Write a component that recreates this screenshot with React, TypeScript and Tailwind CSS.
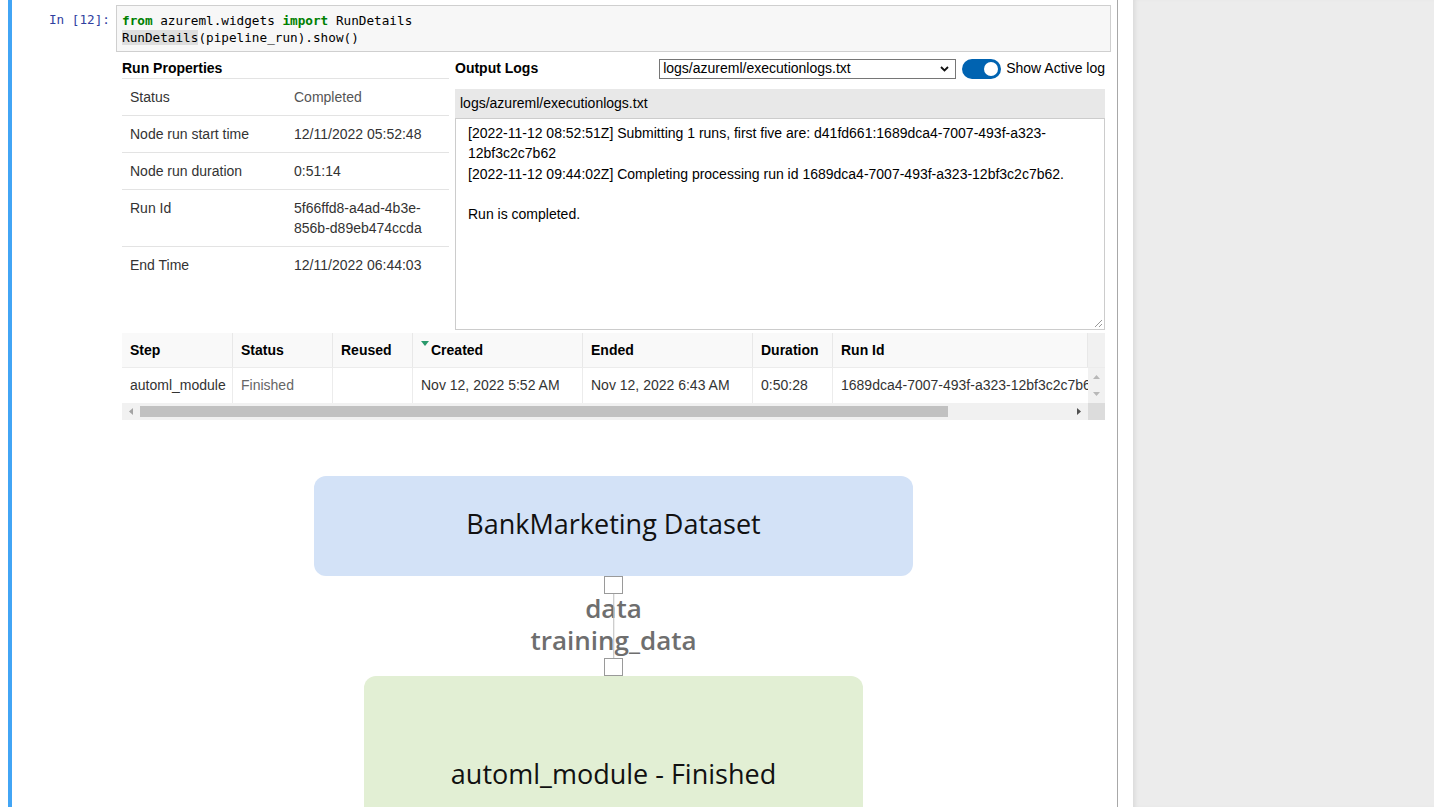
import React from "react";

const runProps = [
  { label: "Status", value: ["Completed"], muted: true },
  { label: "Node run start time", value: ["12/11/2022 05:52:48"] },
  { label: "Node run duration", value: ["0:51:14"] },
  { label: "Run Id", value: ["5f66ffd8-a4ad-4b3e-", "856b-d89eb474ccda"] },
  { label: "End Time", value: ["12/11/2022 06:44:03"] },
];

const columns = [
  { name: "Step", w: "w-[111px]" },
  { name: "Status", w: "w-[100px]" },
  { name: "Reused", w: "w-[80px]" },
  { name: "Created", w: "w-[170px]", sorted: true },
  { name: "Ended", w: "w-[170px]" },
  { name: "Duration", w: "w-[80px]" },
  { name: "Run Id", w: "w-[255px]" },
];

const stepRow = [
  "automl_module",
  "Finished",
  "",
  "Nov 12, 2022 5:52 AM",
  "Nov 12, 2022 6:43 AM",
  "0:50:28",
  "1689dca4-7007-493f-a323-12bf3c2c7b62",
];

const logLines = [
  "[2022-11-12 08:52:51Z] Submitting 1 runs, first five are: d41fd661:1689dca4-7007-493f-a323-",
  "12bf3c2c7b62",
  "[2022-11-12 09:44:02Z] Completing processing run id 1689dca4-7007-493f-a323-12bf3c2c7b62.",
  "",
  "Run is completed.",
];

const Port = () => (
  <div className="w-[19px] h-[18px] border-[1.5px] border-[#9a9a9a] bg-white z-10" />
);

const App = () => {
  return (
    <div className="flex h-[807px] w-[1434px] overflow-hidden bg-white font-['Liberation_Sans',Arial,sans-serif] text-[#333]">
      {/* notebook */}
      <div className="w-[1118px] shrink-0 border-r border-[#a8a8a8] pl-[8px]">
        <div className="h-full border-l-4 border-[#42a5f5] pt-[5px]">
          {/* input */}
          <div className="flex">
            <div className="w-[104px] shrink-0 pr-[6px] pt-[6px] text-right font-['DejaVu_Sans_Mono',monospace] text-[12.7px] leading-[17px] text-[#303f9f]">
              In [12]:
            </div>
            <div className="w-[995px] h-[47px] border border-[#cfcfcf] bg-[#f7f7f7] px-[5px] pt-[6px] font-['DejaVu_Sans_Mono',monospace] text-[12.7px] leading-[17px] text-black whitespace-pre">
              <div>
                <span className="font-bold text-[#008000]">from</span> azureml.widgets{" "}
                <span className="font-bold text-[#008000]">import</span> RunDetails
              </div>
              <div>
                <span className="bg-[#dedede]">RunDetails</span>(pipeline_run).show()
              </div>
            </div>
          </div>

          {/* widget */}
          <div className="ml-[110px] mt-[7px] w-[983px]">
            <div className="flex gap-[6px]">
              {/* run properties */}
              <div className="w-[327px]">
                <div className="h-[19px] text-[14px] font-bold leading-[19px] text-black">Run Properties</div>
                <div className="border-t border-[#e3e3e3]">
                  {runProps.map((p, i) => (
                    <div
                      key={p.label}
                      className={`flex py-[8px] text-[14px] leading-[20px] ${
                        i < runProps.length - 1 ? "border-b border-[#e3e3e3]" : ""
                      }`}
                    >
                      <div className="w-[164px] shrink-0 pl-[8px]">{p.label}</div>
                      <div className={`pl-[8px] ${p.muted ? "text-[#555]" : ""}`}>
                        {p.value.map((v) => (
                          <div key={v}>{v}</div>
                        ))}
                      </div>
                    </div>
                  ))}
                </div>
              </div>

              {/* output logs */}
              <div className="w-[650px]">
                <div className="flex h-[19px] items-center justify-between">
                  <div className="text-[14px] font-bold text-black">Output Logs</div>
                  <div className="flex items-center">
                    <div className="flex h-[20px] w-[297px] items-center justify-between border border-[#767676] bg-white pl-[3px] pr-[6px] text-[14px] text-black">
                      <span>logs/azureml/executionlogs.txt</span>
                      <svg width="9" height="6" viewBox="0 0 9 6">
                        <path d="M1 1l3.5 3.5L8 1" fill="none" stroke="#111" strokeWidth="1.8" />
                      </svg>
                    </div>
                    <div className="ml-[6px] flex h-[20px] w-[39px] items-center justify-end rounded-full bg-[#0063b1] pr-[3px]">
                      <div className="h-[14px] w-[14px] rounded-full bg-white" />
                    </div>
                    <span className="ml-[5px] text-[14px] text-black">Show Active log</span>
                  </div>
                </div>
                <div className="mt-[11px] h-[29px] bg-[#e8e8e8] pl-[5px] text-[14px] leading-[29px] text-black">
                  logs/azureml/executionlogs.txt
                </div>
                <div className="relative h-[212px] border border-[#cccccc] bg-white pl-[12px] pt-[4px] text-[14px] leading-[20.3px] text-black">
                  {logLines.map((l, i) => (
                    <div key={i} className="h-[20.3px] whitespace-nowrap">
                      {l}
                    </div>
                  ))}
                  <svg className="absolute bottom-[1px] right-[1px]" width="9" height="9" viewBox="0 0 9 9">
                    <path d="M8 1L1 8M8 5L5 8" stroke="#999" strokeWidth="1" />
                  </svg>
                </div>
              </div>
            </div>

            {/* steps table */}
            <div className="mt-[3px] w-[983px] text-[14px]">
              <div className="flex h-[34px] bg-[#f9f9f9]">
                {columns.map((c) => (
                  <div
                    key={c.name}
                    className={`${c.w} flex shrink-0 items-center border-r border-[#e8e8e8] pl-[8px] font-bold text-black last:border-r-0`}
                  >
                    {c.sorted && (
                      <svg className="-mt-[14px] mr-[2px]" width="8" height="5" viewBox="0 0 8 5">
                        <path d="M0 0h8L4 5z" fill="#2a9a6c" />
                      </svg>
                    )}
                    {c.name}
                  </div>
                ))}
                <div className="w-[17px] bg-[#f1f1f1]" />
              </div>
              <div className="flex h-[36px] border-t border-[#ececec] bg-white">
                {stepRow.map((v, i) => (
                  <div
                    key={i}
                    className={`${columns[i].w} flex shrink-0 items-center overflow-hidden whitespace-nowrap border-r border-[#ececec] pl-[8px] ${
                      i === 1 ? "text-[#666]" : "text-[#333]"
                    } ${i === 6 ? "border-r-0" : ""}`}
                  >
                    {v}
                  </div>
                ))}
                <div className="flex w-[17px] flex-col items-center justify-between bg-[#f1f1f1] py-[7px]">
                  <svg width="7" height="4" viewBox="0 0 7 4">
                    <path d="M0 4L3.5 0L7 4z" fill="#b8b8b8" />
                  </svg>
                  <svg width="7" height="4" viewBox="0 0 7 4">
                    <path d="M0 0h7L3.5 4z" fill="#b8b8b8" />
                  </svg>
                </div>
              </div>
              <div className="flex h-[17px] bg-[#f1f1f1]">
                <div className="flex w-[966px] items-center">
                  <svg className="ml-[7px] mr-[7px]" width="4" height="7" viewBox="0 0 4 7">
                    <path d="M4 0v7L0 3.5z" fill="#a3a3a3" />
                  </svg>
                  <div className="h-[11px] w-[808px] bg-[#c1c1c1]" />
                  <div className="flex-1" />
                  <svg className="mr-[7px]" width="4" height="7" viewBox="0 0 4 7">
                    <path d="M0 0v7L4 3.5z" fill="#505050" />
                  </svg>
                </div>
                <div className="w-[17px] bg-[#dcdcdc]" />
              </div>
            </div>

            {/* pipeline graph */}
            <div className="mt-[56px] flex flex-col items-center font-['Open_Sans','Noto_Sans',sans-serif]">
              <div className="flex h-[100px] w-[599px] items-center justify-center rounded-[12px] bg-[#d3e2f7] pb-[4px] text-[27px] font-medium text-[#111]">
                BankMarketing Dataset
              </div>
              <div className="relative flex flex-col items-center">
                <div className="absolute left-1/2 top-[18px] h-[64px] w-[1.5px] -translate-x-1/2 bg-[#bdbdbd]" />
                <Port />
                <div className="flex h-[64px] flex-col items-center justify-center pb-[5px] text-[26px] font-semibold leading-[32px] text-[#6e6e6e]">
                  <div>data</div>
                  <div>training_data</div>
                </div>
                <Port />
              </div>
              <div className="flex h-[160px] w-[499px] items-start justify-center rounded-t-[12px] bg-[#e2efd4] pt-[78px] text-[27px] font-medium text-[#111]">
                automl_module - Finished
              </div>
            </div>
          </div>
        </div>
      </div>
      <div className="w-[15px] shrink-0 bg-white" />
      <div className="flex-1 bg-[#ececec] shadow-[inset_4px_0_4px_-2px_rgba(0,0,0,0.08)]" />
    </div>
  );
};

export default App;
